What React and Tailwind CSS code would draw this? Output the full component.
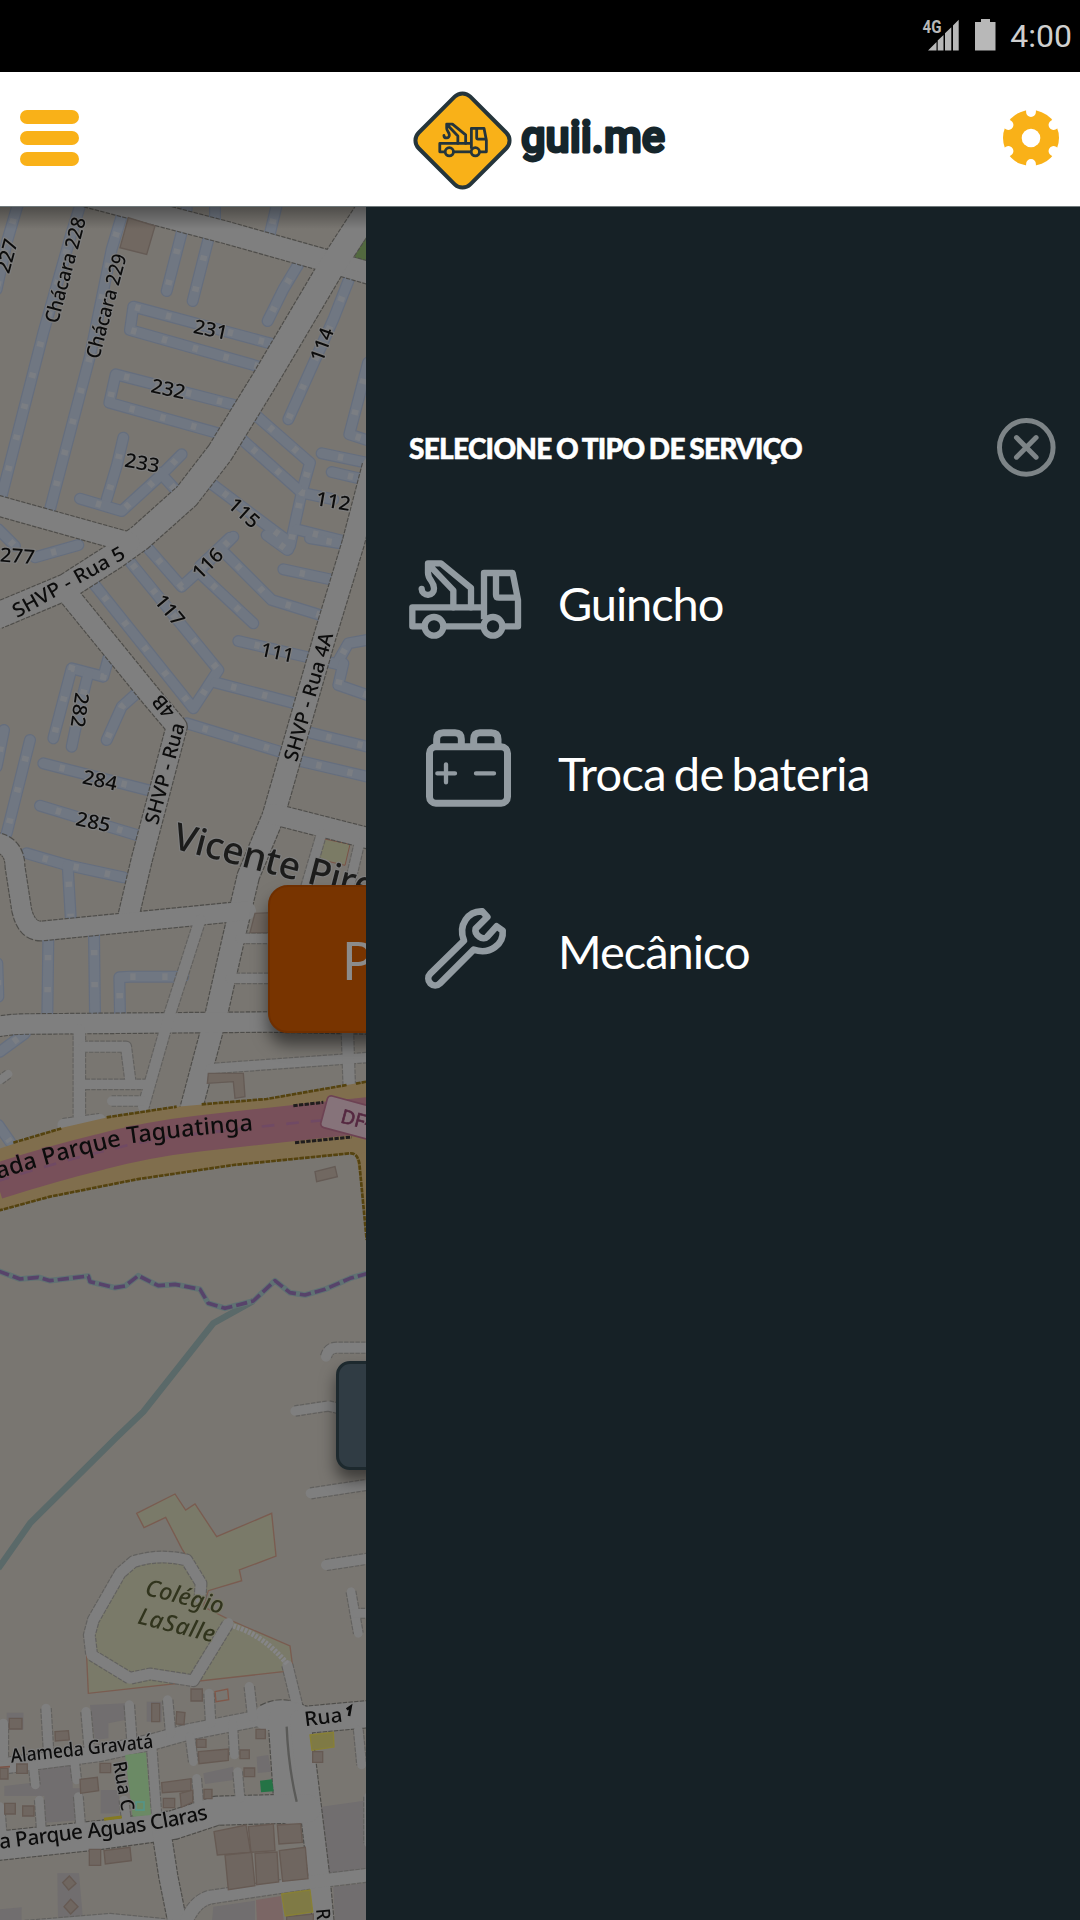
import React from "react";

const LAND = "#797671";
const ROAD = "#7f7f7f";

// Map tiles: each one has its own origin and a grid of a third of a pixel.
const TILES = [
  {
    y: 0,
    blue: [
      "M55,-10 L20,110 L-10,250", "M243,-10 L215,80 L130,380 L5,870", "M365,30 L335,130 L270,450 L150,910",
      "M545,80 L500,255", "M625,100 L578,285", "M895,175 L850,250 L803,345", "M840,420 L400,302 L390,372 L795,487",
      "M715,600 L347,505 L328,590 L655,682", "M560,-10 L560,10", "M645,-10 L645,40", "M832,-10 L808,90",
      "M1045,225 L1000,340 L865,640", "M1104,470 L1048,685 L1110,705", "M370,695 L350,780 L320,880",
      "M240,878 L365,915 L480,810 L545,745", "M480,800 L530,855", "M770,630 L930,770 L905,860 L870,1020",
      "M720,695 L905,860 L1000,880", "M630,830 L870,1010 L865,1030", "M965,742 L1110,772", "M995,798 L1090,820",
      "M890,970 L1030,1005", "M600,1080 L690,995", "M-5,970 L45,1020", "M105,1054 L235,1017",
    ],
    white: [
      ["M260,-30 L680,80 L1000,170 L1120,205", 64],
      ["M1120,-10 L990,190 L795,520 L660,740 L560,870 L420,995 L340,1052 L200,1142 L-10,1230", 76],
      ["M-10,898 L390,1010", 58],
      ["M1120,780 L1060,1010 L975,1290 L820,1830 L745,2010 L700,2200 L650,2420 L565,2740", 64],
    ],
  },
  {
    y: 334,
    blue: [
      "M280,130 L580,505 L655,390 L390,65", "M440,20 L545,140 L600,90 L700,-10", "M600,100 L760,250",
      "M675,40 L815,180 L960,225", "M800,-15 L862,30", "M930,-5 L1020,10", "M850,88 L1000,120",
      "M715,303 L1010,372 L1045,310 L1110,298", "M1030,370 L1015,435 L1110,468", "M645,427 L885,490",
      "M560,550 L840,635", "M930,578 L1110,622", "M900,663 L1110,712", "M325,355 L310,410 L215,385 L160,595",
      "M265,400 L240,500 L215,620", "M410,460 L365,500 L320,600", "M12,570 L-10,680", "M90,600 L20,880",
      "M130,670 L450,752", "M120,797 L410,885", "M80,940 L200,975 L370,1012", "M203,975 L212,1130",
    ],
    white: [
      ["M190,145 L450,465 L530,560 L425,960 L385,1130", 60],
      ["M-20,905 Q45,915 45,980 L65,1110 Q80,1175 125,1173 L740,1112", 56],
      ["M820,822 L1110,896", 60],
      ["M965,880 L915,1050", 28],
      ["M1078,910 L1050,1030", 28],
    ],
  },
  {
    y: 664,
    blue: [
      "M145,205 L142,435", "M282,190 L285,435", "M360,435 L358,322 L390,320 L550,320", "M0,545 L75,490",
      "M-8,280 L-5,380", "M-5,765 L30,815",
    ],
    white: [
      ["M-10,470 Q40,461 90,462 L810,456 L1110,462", 58],
      ["M600,150 L510,430 L430,710", 32],
      ["M238,480 L238,760", 34],
      ["M250,530 L378,530 L392,640", 30],
      ["M240,643 L450,643", 28],
      ["M335,693 L430,693", 28],
      ["M720,205 L830,205", 28],
      ["M690,325 L830,325", 28],
      ["M630,596 L1110,562", 28],
      ["M1042,480 L1048,655", 34],
      ["M190,765 L300,750", 36],
      ["M0,630 L25,612", 24],
    ],
  },
  {
    y: 994,
    blue: [],
    white: [
      ["M978,470 Q985,443 1010,443 L1110,443", 30],
      ["M885,633 L985,618 L1030,628", 28],
      ["M932,880 L1110,853", 30],
      ["M978,1095 L1110,1075", 30],
    ],
  },
  {
    y: 1354,
    blue: [],
    white: [
      ["M600,115 L603,70 L560,0 Q480,-20 400,5 L360,40 L280,180 L268,225 L275,285 L390,355 L450,342 L580,362 L685,190", 32],
      ["M862,315 L895,450", 30],
      ["M-10,620 L300,580 L460,545 L560,517 L800,470", 46],
      ["M800,472 Q850,445 910,480 L1110,462", 78],
      ["M862,480 L880,740", 112],
      ["M900,480 L958,960 L970,1090", 62],
      ["M-10,858 L300,825 L520,795 L650,752 L920,745", 84],
      ["M485,820 L505,950 L535,1100", 54],
      ["M560,1080 Q590,1015 640,1010 L940,965 L1110,945", 38],
      ["M455,560 L470,770", 28],
      ["M10,490 L10,590", 28], ["M138,445 L146,580", 28], ["M258,455 L268,570", 28], ["M388,435 L396,545", 28],
      ["M503,420 L512,520", 28], ["M627,400 L632,490", 28], ["M748,380 L758,470", 28], ["M98,600 L106,675", 26],
      ["M222,590 L230,660", 26], ["M118,720 L124,810", 26], ["M235,710 L243,810", 26], ["M570,530 L580,605", 26],
      ["M698,490 L703,585", 26], ["M590,655 L597,740", 26], ["M713,635 L720,715", 26], ["M0,740 L6,820", 26],
      ["M372,720 L380,790", 26], ["M1075,510 L1085,615", 26], ["M1108,710 L1108,850", 30],
      ["M1053,95 L1075,220", 26], ["M1065,160 L1110,160", 26],
      ["M-10,1100 L330,1072 L520,1090", 20],
    ],
  },
];

// [tile offset, text, x, y, angle, length, size]
const LABELS = [
  [0, "227", 20, 150, -75, 104, 59], [0, "Chácara 228", 195, 192, -75, 326, 59], [0, "Chácara 229", 318, 300, -75, 322, 59],
  [0, "231", 632, 370, 12, 103, 59], [0, "232", 505, 548, 12, 103, 59], [0, "233", 427, 770, 10, 105, 59],
  [0, "114", 965, 415, -70, 103, 59], [0, "115", 733, 920, 42, 103, 59], [0, "112", 1000, 885, 10, 105, 59],
  [334, "277", 52, 47, 4, 105, 59], [334, "SHVP - Rua 5", 205, 125, -29, 376, 59], [334, "116", 622, 70, -45, 103, 59],
  [334, "117", 510, 210, 50, 103, 59], [334, "111", 832, 337, 12, 101, 59], [334, "SHVP - Rua 4A", 925, 470, -74, 398, 59],
  [334, "282", 240, 510, 98, 105, 59], [334, "284", 300, 720, 12, 105, 59], [334, "285", 280, 845, 12, 105, 59],
  [334, "SHVP - Rua", 493, 700, -75, 312, 59], [334, "4B", 490, 500, -130, 70, 59],
  [1354, "Alameda Gravatá", 245, 565, -6, 430, 58], [1354, "Rua C", 372, 678, 80, 150, 56],
  [1354, "Rua", 970, 470, -7, 114, 60], [1354, "R", 970, 1062, 85, 34, 58],
];

const BUILDINGS = [
  "M385,35 L465,60 L440,145 L360,125Z",
  "M625,2602 L730,2602 L735,2672 L705,2677 L700,2627 L622,2632Z",
  "M765,2122 L810,2120 L810,2180 L750,2180Z",
  "M945,2897 L1005,2882 L1012,2912 L950,2927Z",
];

const TOWN = [
  "M28,475 h38 v32 h-38z", "M165,515 l40,-3 l3,28 l-42,3z", "M455,430 h24 v55 h-24z", "M530,455 l25,3 l-3,36 l-24,-2z",
  "M573,387 h34 v36 h-34z", "M595,575 l90,-8 v34 l-88,10z", "M590,538 h28 v24 h-28z", "M768,508 h28 v28 h-28z",
  "M720,570 h28 v26 h-28z", "M732,624 h32 v26 h-32z", "M485,668 l88,-12 v36 l-86,6z", "M240,658 l52,-6 l4,40 l-54,8z",
  "M300,610 h32 v28 h-32z", "M50,612 h32 v28 h-32z", "M0,625 h24 v32 h-24z", "M14,730 h32 v32 h-32z", "M68,738 h34 v30 h-34z",
  "M490,715 h34 v28 h-34z", "M540,700 l38,-10 v36 l-34,16z", "M612,688 h24 v28 h-24z", "M268,868 h34 v48 h-34z",
  "M312,872 l78,-10 l4,40 l-78,10z", "M642,815 l96,-20 l14,82 l-100,8z", "M745,800 l75,-8 l5,80 l-72,5z",
  "M832,795 l70,-4 l5,56 l-70,5z", "M675,885 l80,-8 l10,100 l-80,12z", "M765,880 l66,-4 l5,90 l-66,8z",
  "M838,872 l78,-10 l8,94 l-76,8z", "M938,575 h30 v32 h-30z", "M208,948 l20,22 l-22,20 l-18,-22z", "M212,1018 l22,22 l-22,22 l-20,-22z",
  "M860,1070 l80,-8 v28 h-80z",
];

const GREY = [
  "M270,435 l105,-5 v50 l-50,10 v45 l-40,5z", "M118,610 h100 v75 h30 v95 l-115,8 v-80 h-120 v-30 l105,-12z", "M440,425 h45 v60 h-45z",
  "M610,640 l90,-20 v40 l-85,12z", "M302,690 h55 v70 h-55z", "M20,458 h50 v50 h-50z", "M965,740 l145,-20 v215 l-130,10z",
  "M172,940 h65 l12,140 h-75z", "M640,1040 l125,-18 v70 h-130z", "M1000,980 l110,-12 v122 h-105z", "M0,1048 l65,-6 v48 h-65z",
  "M770,590 l35,-5 l8,50 l-40,4z",
];

const BOUNDARY =
  "M-5,213 L60,237 L115,232 L150,242 L265,228 L270,245 L345,263 L375,258 L415,227 L475,257 L525,253 L600,268 L625,310 L675,325 L760,303 L825,242 L870,278 L915,285 L975,268 L1050,235 L1110,218";

function each(pick) {
  return TILES.map((t) => (
    <g key={t.y} transform={`translate(0 ${t.y * 3})`}>
      {pick(t)}
    </g>
  ));
}

function StreetMap() {
  return (
    <svg viewBox="0 0 1098 5142" className="-mt-px block h-[1714px] w-[366px] blur-[0.5px]" fill="none">
      <rect width="1098" height="5142" fill={LAND} />
      <path d="M1098,88 L1058,162 L1098,172Z" fill="#52693f" />
      <path d="M955,1895 L1050,1915 L1035,1978 L950,1958Z" fill="#7b7b65" stroke="#7b5346" strokeWidth="3" />
      {/* school grounds */}
      <path
        transform="translate(0 4062)"
        d="M410,-140 L525,-198 L557,-150 L585,-168 L650,-70 L815,-140 L828,-12 L718,30 L725,62 L625,92 L610,140 L690,180 L870,258 L878,320 L850,335 L265,400 L260,290 L270,190 L360,30 L430,-10 L560,-10 L545,-35 L497,-128 L432,-97Z"
        fill="#7a7a69" stroke="#7a5c50" strokeWidth="4"
      />
      <g transform="translate(0 4062)">
        {GREY.map((d) => <path key={d} d={d} fill="#716e6f" />)}
        <path d="M768,1020 l75,-12 l8,72 l-80,10z" fill="#7b6665" />
      </g>

      {each((t) => t.blue.map((d) => <path key={d} d={d} stroke="#656e7e" strokeWidth="36" strokeLinecap="round" strokeLinejoin="round" />))}
      {each((t) => t.blue.map((d) => <path key={d} d={d} stroke="#707782" strokeWidth="29" strokeLinecap="round" strokeLinejoin="round" />))}
      {each((t) => t.blue.map((d) => <path key={d} d={d} stroke="#7b7e83" strokeWidth="20" strokeDasharray="16 80" strokeDashoffset="-50" />))}
      {each((t) => t.white.map(([d, w]) => <path key={d} d={d} stroke={w > 50 ? "#4e4d4a" : "#62615f"} strokeWidth={w + 7} strokeDasharray="13 4" strokeLinejoin="round" />))}
      {each((t) => t.white.map(([d, w]) => <path key={d} d={d} stroke={ROAD} strokeWidth={w} strokeLinecap="round" strokeLinejoin="round" />))}

      {BUILDINGS.map((d) => <path key={d} d={d} fill="#716861" stroke="#655b55" strokeWidth="4" />)}
      <g transform="translate(0 4062)">
        {TOWN.map((d) => <path key={d} d={d} fill="#6f6660" stroke="#665a53" strokeWidth="4" />)}
        <path d="M645,395 l38,-8 l3,32 l-38,6z" stroke="#80584a" strokeWidth="4" />
        <path d="M375,585 L438,577 L453,765 L398,770Z" fill="#6b8a65" />
        <rect x="408" y="726" width="24" height="24" stroke="#559488" strokeWidth="5" />
        <path d="M780,662 l36,-4 l5,36 l-38,3z" fill="#247345" />
        <path d="M930,525 l70,-8 l2,44 l-66,10z" fill="#7f7a45" stroke="#888034" strokeWidth="4" />
        <path d="M845,1002 l85,-12 l8,66 l-82,12z" fill="#7f7a45" stroke="#888034" strokeWidth="4" />
        <path d="M312,778 L365,771" stroke="#857a20" strokeWidth="9" />
        <path d="M860,500 Q865,620 890,725" stroke="#5a5a58" strokeWidth="7" />
        <path d="M700,198 Q790,225 862,312" stroke="#858587" strokeWidth="16" strokeDasharray="8 4" />
        <path d="M-5,622 L30,620" stroke="#7b5346" strokeWidth="5" />
      </g>

      {/* motorway */}
      <g transform="translate(0 1992)">
        <path d="M-5,837 L180,775 L330,740 L530,710 L800,687 L1040,645 L1110,633 L1110,1120 L1090,950 L1065,850 L700,885 L410,928 L150,980 L-5,1022Z" fill="#806e4d" />
        <path d="M1068,852 L1110,1120 V846Z" fill="#806e4d" />
        <path d="M-10,934 Q160,880 300,846 Q440,808 600,790 L900,757 L1110,735" stroke="#78505a" strokeWidth="108" />
        <path d="M-10,934 Q160,880 300,846 Q440,808 600,790 L900,757 L1000,748" stroke="#704a64" strokeWidth="8" strokeDasharray="38 36" />
        <path d="M40,818 L185,775 M320,742 L530,710 M605,703 L800,687 L1040,645 M1068,641 L1110,633 M-5,1022 L150,980 L410,928 L700,885 L1050,850 Q1072,848 1078,880 L1100,1110" stroke="#55430f" strokeWidth="8" strokeDasharray="14 3" />
        <path d="M880,707 L970,697 M885,818 L1055,801" stroke="#201d1d" strokeWidth="9" strokeDasharray="13 4" />
        <g transform="translate(985 675) rotate(15)">
          <rect width="240" height="98" rx="12" fill="#86737a" stroke="#6d4253" strokeWidth="5" />
          <text x="54" y="70" fill="#552840" stroke="#552840" strokeWidth="2" fontSize="58" fontFamily="Noto Sans, sans-serif">DF-</text>
        </g>
      </g>

      {/* stream and district boundary */}
      <g transform="translate(0 2982)" strokeLinejoin="round">
        <path d="M760,303 L640,370 L430,635 L350,712 L90,970 L-5,1105" stroke="#5a6969" strokeWidth="19" />
        <path d={BOUNDARY} stroke="#5f7273" strokeWidth="17" />
        <path d={BOUNDARY} stroke="#57436a" strokeWidth="11" strokeDasharray="34 12" />
      </g>

      {/* labels */}
      <g fontFamily="Noto Sans, sans-serif" fontWeight="500" fill="#0c0c0c" stroke="#7f7f7f" strokeWidth="7" strokeLinejoin="round" paintOrder="stroke">
        {LABELS.map(([dy, s, x, y, a, len, size]) => (
          <text key={s + x} transform={`translate(${x} ${y + dy * 3}) rotate(${a})`} x={-len / 2} y={size * 0.36} fontSize={size} textLength={len} lengthAdjust="spacingAndGlyphs">
            {s}
          </text>
        ))}
        <text transform="translate(514 1926) rotate(14.5)" fontSize="112" letterSpacing="-1" fill="#1c1c1b">Vicente Pires</text>
        <path id="road-name" d="M-5,2919 Q200,2854 395,2812 Q570,2787 780,2772" fill="none" stroke="none" />
        <text fontSize="70" stroke="#78505a" strokeWidth="4"><textPath href="#road-name" textLength="781">ada Parque Taguatinga</textPath></text>
        <path id="avenue-name" d="M0,4928 L240,4898 Q450,4880 640,4835" fill="none" stroke="none" />
        <text fontSize="62"><textPath href="#avenue-name" textLength="632">a Parque Aguas Claras</textPath></text>
        <g fontStyle="italic" fill="#31341d" stroke="#7a7a69">
          <text transform="translate(432 4166) rotate(14)" fontSize="70" textLength="240">Colégio</text>
          <text transform="translate(410 4252) rotate(14)" fontSize="70" textLength="236">LaSalle</text>
        </g>
      </g>
      <path d="M1040,4510 L1052,4502 L1047,4530" stroke="#0c0c0c" strokeWidth="8" />
    </svg>
  );
}

function TowTruck({ className, viewBox, stroke, width }) {
  return (
    <svg className={className} viewBox={viewBox} fill="none" stroke={stroke} strokeWidth={width} strokeLinejoin="round">
      <path d="M102,649 H67 V592 H281" />
      <path d="M162,649 H280" />
      <path d="M338,649 H384 V570 L368,489 H282 V628" />
      <path d="M318,489 V554 Q318,563 327,563 H384" />
      <path d="M190,592 V541 L122,470 M243,592 V534 L153,460 H114 V488 C114,510 132,513 132,535 A18,18 0 0 1 95,537" strokeLinecap="round" />
      <circle cx="132" cy="649" r="28" />
      <circle cx="309" cy="649" r="28" />
    </svg>
  );
}

function Battery() {
  return (
    <svg className="h-[84px] w-[149px] shrink-0 overflow-visible" viewBox="57 93 447 252" fill="none" stroke="#929ba1" strokeWidth="21">
      <rect x="118.500" y="140.500" width="234" height="169" rx="19" />
      <path d="M140,138 V118 Q140,98 160,98 H195 Q214,98 214,118 V138 M251,138 V118 Q251,98 270,98 H304 Q324,98 324,118 V138" />
      <path d="M142,220 H195 M168,193 V247 M258,220 H312" strokeWidth="13" strokeLinecap="round" />
    </svg>
  );
}

function Wrench() {
  return (
    <svg className="h-[84px] w-[149px] shrink-0 overflow-visible" viewBox="57 627 447 252" fill="none" stroke="#929ba1" strokeWidth="20" strokeLinejoin="round">
      <path d="M222,722 L121,821 A20,20 0 0 0 150,850 L251,749 C300,766 342,732 338,692 L320,679 L291,711 C280,722 252,706 257,686 L292,651 L277,634 C235,632 203,675 222,722Z" />
    </svg>
  );
}

function ServiceRow({ icon, label, className }) {
  return (
    <button className={`flex h-[84px] items-center text-left ${className}`}>
      {icon}
      <span className="whitespace-nowrap leading-none">{label}</span>
    </button>
  );
}

function StatusBar() {
  return (
    <div className="flex h-[72px] items-start justify-end bg-black pr-[8px]">
      <svg className="mt-[18px] h-[34px] w-[40px] overflow-visible" viewBox="0 0 40 34" fill="#b8b8b8">
        <text x="1.500" y="15" fontSize="19" fontWeight="700" fontFamily="Roboto, sans-serif" textLength="19" lengthAdjust="spacingAndGlyphs">4G</text>
        <path d="M7,32.500 L15.500,24 V32.500Z M16.700,32.500 V22.500 L22.500,17 V32.500Z M24,32.500 V15.300 L30.300,9.200 V32.500Z M32,32.500 V7.500 L37.700,1.800 V32.500Z" />
      </svg>
      <svg className="ml-[14px] mt-[18px] h-[34px] w-[21px]" viewBox="0 0 21 34" fill="#b8b8b8">
        <path d="M6,1 H15 V4 H20.500 V32.500 H0 V4 H6Z" />
      </svg>
      <span className="ml-[14px] mt-[19px] font-[Roboto,sans-serif] text-[32px] leading-[34px] text-[#cfcfcf]">4:00</span>
    </div>
  );
}

function Header() {
  return (
    <header className="flex h-[135px] items-start justify-between border-b border-[#70797b] bg-white pl-[20px] pr-[21px]">
      <button className="mt-[38px] flex flex-col gap-[7px]" aria-label="Menu">
        <span className="h-[14px] w-[59px] rounded-full bg-[#f9b118]" />
        <span className="h-[14px] w-[59px] rounded-full bg-[#f9b118]" />
        <span className="h-[14px] w-[59px] rounded-full bg-[#f9b118]" />
      </button>
      <div className="-ml-px mt-[19px] flex">
        <div className="grid h-[98px] w-[98px] place-items-center">
          <div className="col-start-1 row-start-1 h-[77px] w-[77px] rotate-45 rounded-[13px] border-[4px] border-[#25353b] bg-[#f9b118]" />
          <TowTruck className="z-10 col-start-1 row-start-1 h-[36px] w-[52px]" viewBox="50 446 350 245" stroke="#25353b" width="19" />
        </div>
        <svg className="h-[98px] w-[156px] overflow-visible" viewBox="0 0 156 98">
          <text x="9" y="60.500" fontSize="45" fontWeight="500" fontFamily="Roboto, sans-serif" fill="#15252b" stroke="#15252b" strokeWidth="2.800" strokeLinejoin="round" textLength="144" lengthAdjust="spacingAndGlyphs">guii.me</text>
        </svg>
      </div>
      <svg className="mt-[38px] h-[56px] w-[56px]" viewBox="-28 -28 56 56">
        <circle r="28" fill="#f9b118" />
        <circle r="9.300" fill="#fff" />
        <path d="M0,-26 V-34 M0,26 V34 M22.500,-13 L29,-17 M22.500,13 L29,17 M-22.500,-13 L-29,-17 M-22.500,13 L-29,17" stroke="#fff" strokeWidth="9.800" strokeLinecap="round" />
      </svg>
    </header>
  );
}

export default function App() {
  return (
    <div className="flex h-[1920px] w-[1080px] flex-col overflow-hidden bg-black">
      <StatusBar />
      <Header />
      <main className="flex h-[1713px]">
        <section className="relative w-[366px] shrink-0 overflow-hidden bg-[#797671]">
          <StreetMap />
          <div className="absolute inset-x-0 top-0 h-[22px] bg-linear-to-b from-black/35 to-transparent" />
          <button className="absolute left-[268px] top-[678px] flex h-[148px] w-[544px] items-center rounded-[20px] border-2 border-[#6f2f00] bg-[#783400] pl-[72px] pt-[2px] font-[Lato,sans-serif] text-[53px] text-[#8b8b8b] shadow-[0_12px_16px_rgba(0,0,0,0.5)]">
            P
          </button>
          <div className="absolute left-[336px] top-[1154px] h-[109px] w-[408px] rounded-[14px] border-[3px] border-[#1d292e] bg-[#303c44] shadow-[0_10px_16px_rgba(0,0,0,0.5)]" />
        </section>
        <aside className="flex flex-1 flex-col bg-[#162126] pl-[43px] pt-[211px] font-[Lato,sans-serif] text-[47px] text-white">
          <div className="flex h-[60px] items-center justify-between pr-[23px]">
            <h1 className="whitespace-nowrap text-[28px] font-black leading-none tracking-[-0.72px] [-webkit-text-stroke:0.5px_white] [word-spacing:-1.5px]">SELECIONE O TIPO DE SERVIÇO</h1>
            <svg className="h-[60px] w-[60px]" viewBox="-29.3 -29.4 60 60" fill="none" stroke="#7d8487">
              <circle r="26.800" strokeWidth="5" />
              <path d="M-9.800,-9.800 L9.800,9.800 M-9.800,9.800 L9.800,-9.800" strokeWidth="5" strokeLinecap="round" />
            </svg>
          </div>
          <ServiceRow
            className="mt-[83px] tracking-[-1.1px]"
            label="Guincho"
            icon={<TowTruck className="h-[84px] w-[149px] shrink-0 overflow-visible" viewBox="57 453 447 252" stroke="#929ba1" width="19" />}
          />
          <ServiceRow className="mt-[86px] tracking-[-0.65px] [word-spacing:-3.5px]" label="Troca de bateria" icon={<Battery />} />
          <ServiceRow className="mt-[94px] tracking-[-1px]" label="Mecânico" icon={<Wrench />} />
        </aside>
      </main>
    </div>
  );
}
